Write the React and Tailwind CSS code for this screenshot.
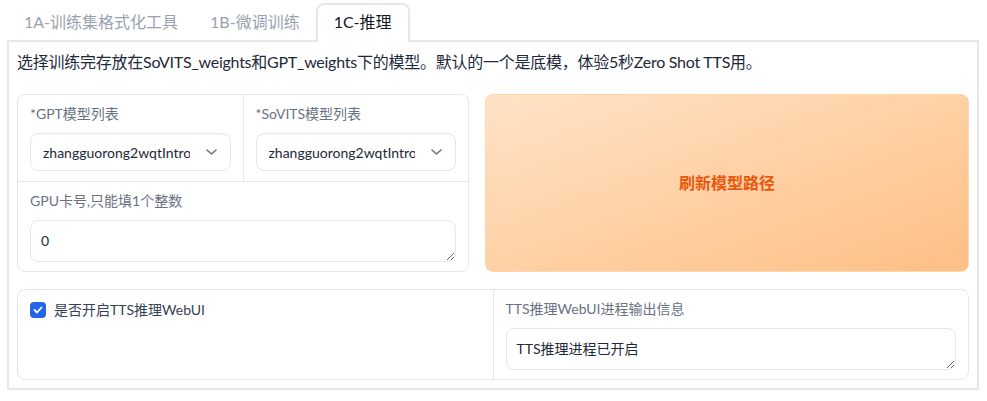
import React from "react";

const font = { fontFamily: 'Lato, "Noto Sans CJK SC", sans-serif' };

const tabs = ["1A-训练集格式化工具", "1B-微调训练", "1C-推理"];

const Chevron = () => (
  <svg width="11" height="6" viewBox="0 0 11 6" fill="none">
    <polyline points="1,1 5.5,5 10,1" stroke="#6b7280" strokeWidth="1.6" strokeLinecap="round" strokeLinejoin="round" />
  </svg>
);

const Dropdown = ({ label, value }) => (
  <div className="flex-1 min-w-0 pt-3 pb-[10px] px-3">
    <p className="text-[14px] leading-[14px] text-gray-500 mb-3">{label}</p>
    <div className="h-[38px] rounded-lg border border-gray-200 bg-white flex items-center pl-3 shadow-[inset_0_1px_2px_rgba(0,0,0,0.03)]">
      <span className="flex-1 min-w-0 overflow-hidden whitespace-nowrap text-[14px] text-gray-800">{value}</span>
      <span className="ml-4 mr-[13px] flex">
        <Chevron />
      </span>
    </div>
  </div>
);

const TextBox = ({ value }) => (
  <textarea
    readOnly
    rows={1}
    defaultValue={value}
    className="block w-full h-[42px] rounded-lg border border-gray-200 px-[10px] py-[10px] text-[14px] leading-[20px] text-gray-800 outline-none resize-y"
    style={font}
  />
);

const App = () => {
  return (
    <div className="bg-white pl-[7px] pr-[8px] pt-[3px]" style={font}>
      <div className="flex items-end ml-[1px]">
        {tabs.map((tab, i) =>
          i === 2 ? (
            <div
              key={tab}
              className="relative z-10 -mb-[2px] h-[39px] flex items-center pb-[3px] px-4 border-2 border-b-0 border-gray-200 rounded-t-lg bg-white text-[16px] text-gray-900"
            >
              {tab}
            </div>
          ) : (
            <div
              key={tab}
              className="-mb-[2px] h-[39px] flex items-center pb-[3px] px-[14px] border-2 border-b-0 border-transparent text-[16px] text-gray-400"
            >
              {tab}
            </div>
          )
        )}
      </div>

      <div className="border-2 border-gray-200 px-2 pt-2 pb-2">
        <p className="text-[16px] leading-[24px] tracking-[-0.25px] text-gray-800">
          选择训练完存放在SoVITS_weights和GPT_weights下的模型。默认的一个是底模，体验5秒Zero Shot TTS用。
        </p>

        <div className="flex gap-4 mt-5">
          <div className="w-[452px] border border-gray-200 rounded-lg flex flex-col">
            <div className="flex">
              <Dropdown label="*GPT模型列表" value="zhangguorong2wqtIntroduction-e15.ckpt" />
              <div className="w-px bg-gray-200" />
              <Dropdown label="*SoVITS模型列表" value="zhangguorong2wqtIntroduction_e8_s120.pth" />
            </div>
            <div className="h-px bg-gray-200" />
            <div className="pt-3 pb-[9px] px-3">
              <p className="text-[14px] leading-[14px] text-gray-500 mb-3">GPU卡号,只能填1个整数</p>
              <TextBox value="0" />
            </div>
          </div>

          <button className="flex-1 rounded-lg border border-[#fed7aa] bg-gradient-to-br from-[#ffe2c6] to-[#fdbf84] text-[16px] font-semibold text-[#ea580c]">
            刷新模型路径
          </button>
        </div>

        <div className="flex mt-[17px] border border-gray-200 rounded-lg">
          <div className="flex-1 p-3">
            <label className="flex items-center gap-2 text-[14px] leading-[16px] text-gray-700">
              <span className="w-4 h-4 rounded-[4px] bg-[#2563eb] flex items-center justify-center">
                <svg width="10" height="8" viewBox="0 0 10 8" fill="none">
                  <polyline points="1.5,4 4,6.5 8.5,1.5" stroke="white" strokeWidth="1.8" strokeLinecap="round" strokeLinejoin="round" />
                </svg>
              </span>
              是否开启TTS推理WebUI
            </label>
          </div>
          <div className="w-px bg-gray-200" />
          <div className="flex-1 pt-3 pb-[9px] px-3">
            <p className="text-[14px] leading-[14px] text-gray-500 mb-3">TTS推理WebUI进程输出信息</p>
            <TextBox value="TTS推理进程已开启" />
          </div>
        </div>
      </div>
    </div>
  );
};

export default App;
